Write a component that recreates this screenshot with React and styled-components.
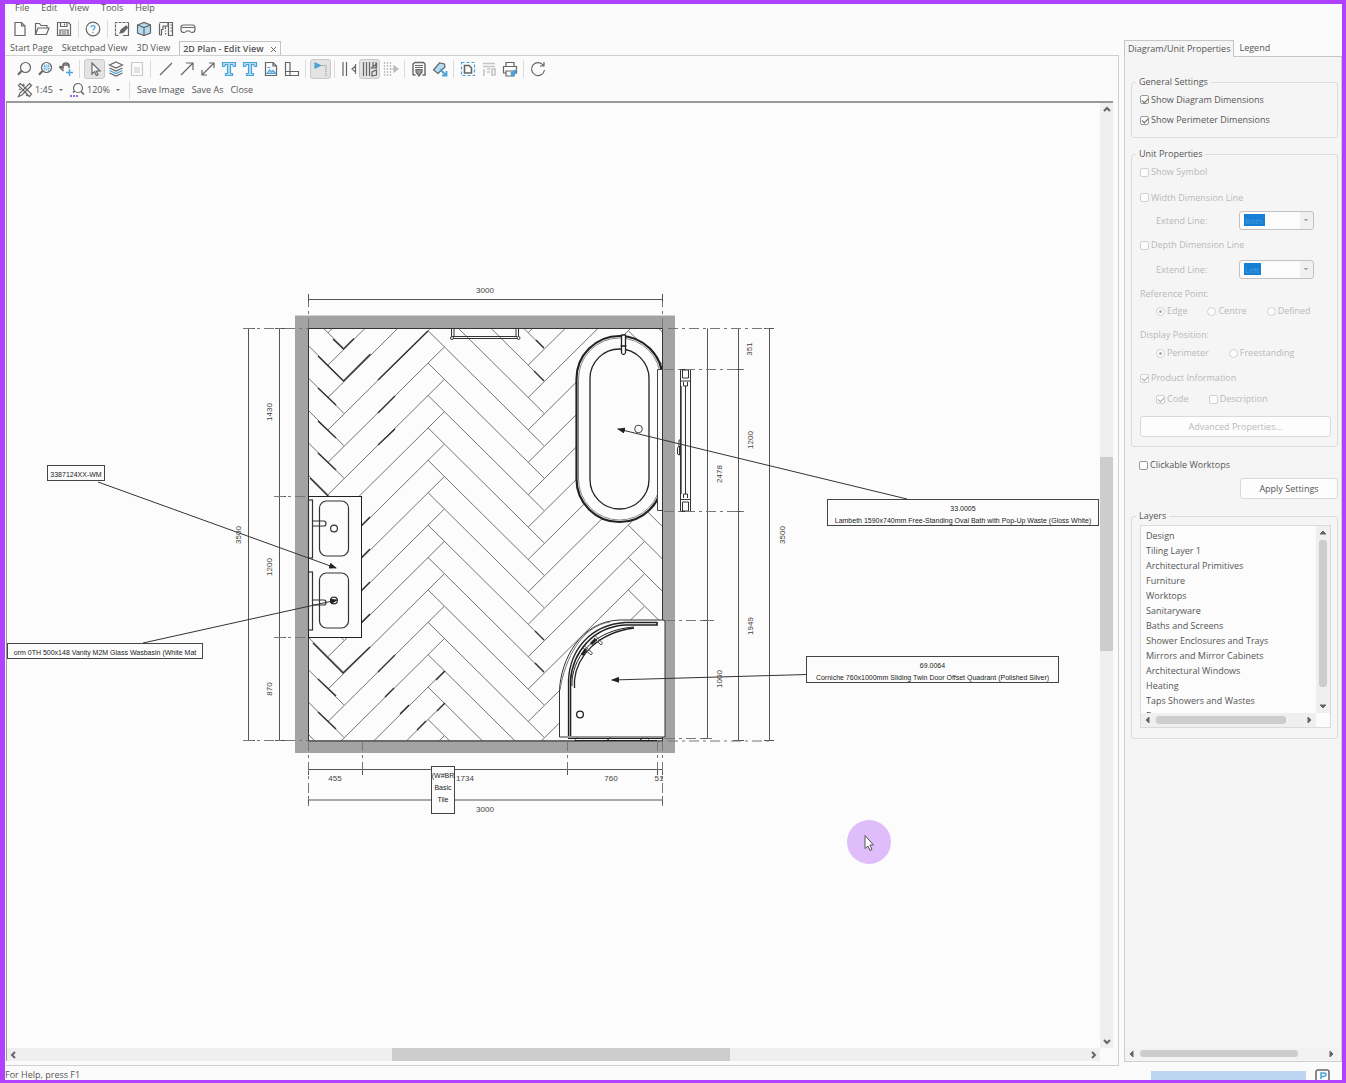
import React, { useState } from "react";
import styled, { createGlobalStyle, css } from "styled-components";

const GlobalStyle = createGlobalStyle`
  * { box-sizing: border-box; }
  body {
    margin: 0;
    background: #fbfbfb;
    color: #555;
    font-family: "Open Sans", "Noto Sans", sans-serif;
    font-size: 9px;
    line-height: 12px;
  }
  button, select, input { font: inherit; color: inherit; margin: 0; }
`;

const Window = styled.div`
  height: 100vh;
  display: flex;
  flex-direction: column;
  overflow: hidden;
  background: #fbfbfb;
  border: 4px solid #b041ff;
  border-left-width: 5px;
  border-bottom-width: 3px;
`;
const Main = styled.div`
  flex: 1;
  min-height: 0;
  display: flex;
`;
const Workspace = styled.main`
  flex: 1;
  min-width: 0;
  display: flex;
  flex-direction: column;
`;
const MenuBar = styled.nav`
  display: flex;
  gap: 12px;
  height: 12px;
  padding-left: 10px;
`;
const MenuItem = styled.button`
  height: 8px;
  padding: 0;
  border: 0;
  background: none;
  line-height: 8px;
`;
const Toolbar = styled.div`
  display: flex;
  align-items: center;
  height: ${p => p.$height}px;
  padding-left: ${p => p.$indent}px;
`;
const ToolButton = styled.button`
  display: flex;
  align-items: center;
  justify-content: center;
  width: ${p => p.$width || 21}px;
  height: 20px;
  padding: 0;
  border: 1px solid transparent;
  border-radius: 3px;
  background: none;
  ${p => p.$active && css`
    background: #e3e3e3;
    border-color: #c9c9c9;
  `}
`;
const Separator = styled.span`
  width: 1px;
  height: 18px;
  margin: 0 ${p => p.$gap || 3}px 0 3px;
  background: #dcdcdc;
`;
const TextButton = styled.button`
  padding: 0;
  margin-right: 7px;
  border: 0;
  background: none;
`;
const PickButton = styled.button`
  display: flex;
  align-items: center;
  gap: 2px;
  width: ${p => p.$width}px;
  padding: 0;
  margin-right: 6px;
  border: 0;
  background: none;
`;
const Caret = styled.span`
  margin-left: auto;
  border: 2px solid transparent;
  border-top-color: #666;
  border-bottom: 0;
`;
const Tabs = styled.div`
  display: flex;
  align-items: flex-end;
  height: 14px;
  padding-left: 5px;
`;
const Tab = styled.button`
  display: flex;
  align-items: center;
  height: 14px;
  padding: 0;
  margin-right: 9px;
  border: 0;
  background: none;
  white-space: nowrap;
  ${p => p.$active && css`
    height: 15px;
    margin: 0 0 -1px 0;
    padding: 0 3px;
    gap: 6px;
    font-weight: 600;
    background: #fbfbfb;
    border: 1px solid #c4c4c4;
    border-bottom: 0;
  `}
`;
const DocFrame = styled.section`
  flex: 1;
  min-height: 0;
  display: flex;
  flex-direction: column;
  border: 1px solid #cfcfcf;
  border-left: 0;
  padding: 3px 5px 4px 0;
`;
const CanvasGrid = styled.div`
  flex: 1;
  min-height: 0;
  margin-left: 1px;
  display: grid;
  grid-template-columns: minmax(0, 1fr) 13px;
  grid-template-rows: minmax(0, 1fr) 13px;
  border-top: 2px solid #9a9a9a;
  border-left: 1px solid #9a9a9a;
`;
const Viewport = styled.div`
  overflow: hidden;
  background: #fcfcfc;
`;
const PlanSvg = styled.svg`
  display: block;
  overflow: visible;
  font-family: "Liberation Sans", Arial, sans-serif;
`;

const ScrollTrack = styled.div`
  display: flex;
  flex-direction: ${p => (p.$vertical ? "column" : "row")};
  background: ${p => p.$bg || "#efefef"};
  min-width: 0;
  min-height: 0;
`;
const ScrollArrow = styled.button`
  flex: 0 0 14px;
  display: flex;
  align-items: center;
  justify-content: center;
  padding: 0;
  border: 0;
  background: none;
`;
const ScrollSpace = styled.div`
  flex: ${p => p.$part} 1 0;
`;
const ScrollThumb = styled.div`
  flex: ${p => p.$part} 1 0;
  background: #cdcdcd;
  margin: ${p => (p.$round ? (p.$vertical ? "0 3px" : "3px 0") : "0")};
  border-radius: ${p => (p.$round ? "3px" : "0")};
`;

const Side = styled.aside`
  flex: 0 0 223px;
  display: flex;
  flex-direction: column;
  padding: 36px 0 4px 5px;
`;
const SideTabs = styled.div`
  display: flex;
  height: 17px;
`;
const SideTab = styled.button`
  padding: ${p => (p.$active ? "0 3px" : "0 5px")};
  border: 0;
  border-bottom: 1px solid #c6c6c6;
  background: none;
  white-space: nowrap;
  ${p => p.$active && css`
    background: #f5f5f5;
    border: 1px solid #c6c6c6;
    border-bottom: 0;
  `}
`;
const TabFill = styled.div`
  flex: 1;
  border-bottom: 1px solid #c6c6c6;
`;
const SideBody = styled.form`
  flex: 1;
  min-height: 0;
  display: flex;
  flex-direction: column;
  padding: 19px 3px 1px 6px;
  background: #f5f5f5;
  border: 1px solid #cfcfcf;
  border-top: 0;
`;
const Group = styled.fieldset`
  min-width: 0;
  margin: 0 0 ${p => p.$after || 0}px;
  padding: ${p => p.$pad};
  border: 1px solid #dcdcdc;
  border-radius: 3px;
`;
const GroupTitle = styled.legend`
  height: 12px;
  padding: 0 3px;
  margin-left: -4px;
`;
const Row = styled.div`
  display: flex;
  align-items: center;
  height: ${p => p.$height || 20}px;
  margin-top: ${p => p.$top || 0}px;
  padding-left: ${p => p.$indent || 0}px;
  gap: ${p => p.$gap || 0}px;
  color: ${p => (p.$disabled ? "#b9b9b9" : "#555")};
`;
const CheckLabel = styled.label`
  display: flex;
  align-items: center;
  gap: 2px;
  white-space: nowrap;
`;
const CheckInput = styled.input`
  appearance: none;
  width: 9px;
  height: 9px;
  display: grid;
  place-items: center;
  background: #fdfdfd;
  border: 1px solid ${p => (p.disabled ? "#d0d0d0" : "#999")};
  border-radius: ${p => (p.type === "radio" ? "50%" : "2px")};
  &:checked::after {
    content: "";
    ${p => p.type === "radio" ? css`
      width: 3px;
      height: 3px;
      border-radius: 50%;
      background: #aaa;
    ` : css`
      width: 5px;
      height: 3px;
      border: solid ${p.disabled ? "#aaa" : "#666"};
      border-width: 0 0 1px 1px;
      transform: rotate(-45deg);
    `}
  }
`;
const LineLabel = styled.label`
  width: 83px;
`;
const LineSelect = styled.select`
  appearance: none;
  width: 75px;
  height: 19px;
  padding: 0 0 0 5px;
  color: #4f9ad6;
  opacity: 1;
  border: 1px solid #c2c2c2;
  border-radius: 3px;
  font-size: 8px;
  background:
    linear-gradient(#1580d6, #1580d6) 4px 2px / ${p => p.$mark}px 12px no-repeat,
    linear-gradient(45deg, transparent 50%, #aaa 50%) 64px 7px / 2px 3px no-repeat,
    linear-gradient(-45deg, transparent 50%, #aaa 50%) 66px 7px / 2px 3px no-repeat,
    linear-gradient(#f0f0f0, #f0f0f0) right / 13px 100% no-repeat,
    #fcfcfc;
`;
const PanelButton = styled.button`
  width: ${p => p.$width || "100%"};
  height: 21px;
  margin-top: ${p => p.$top || 0}px;
  padding: 0;
  background: #fdfdfd;
  border: 1px solid #d9d9d9;
  border-radius: 3px;
  color: ${p => (p.disabled ? "#b9b9b9" : "#555")};
`;
const ButtonRow = styled.div`
  display: flex;
  justify-content: flex-end;
  margin: 3px 0 11px;
`;
const LayerBox = styled.div`
  display: grid;
  grid-template-columns: minmax(0, 1fr) 14px;
  grid-template-rows: 187px 14px;
  background: #fcfcfc;
  border: 1px solid #dadada;
`;
const LayerList = styled.ul`
  margin: 0;
  padding: 2px 0 0 5px;
  overflow: hidden;
  list-style: none;
`;
const LayerItem = styled.li`
  height: 15px;
  line-height: 15px;
  white-space: nowrap;
`;
const Filler = styled.div`
  flex: 1;
`;
const SideScroll = styled.div`
  display: grid;
  height: 13px;
  margin: 0 0 0 -6px;
`;
const StatusBar = styled.footer`
  display: flex;
  height: 14px;
  padding-right: 9px;
  gap: 9px;
`;
const StatusText = styled.span`
  flex: 1;
  padding-top: 3px;
  line-height: 11px;
`;
const StatusProgress = styled.div`
  width: 155px;
  margin-top: 5px;
  background: #bdd5f0;
`;

const G = "#666";
const B = "#4aa3d8";

const icons = {
  newFile: <path d="M3 1.5h6.5L13 5v9.5H3zM9.5 1.5V5H13" />,
  open: <path d="M1.5 13.5v-11h4l1.5 2h6v2.5M1.5 13.5l2.5-6.500h11l-2.500 6.500z" />,
  save: <path d="M1.500 1.500h11l2 2v11h-13zM4.500 1.500v4h6.500v-4M8.500 2.500v2M4 14.500V9h8v5.500M5.500 11h5M5.500 13h5" />,
  help: <><circle cx="8" cy="8" r="6.800" /><path stroke={B} d="M6 6.300C6 4 10 4 10 6.300 10 8 8 7.800 8 9.500M8 11v1.200" /></>,
  design: <><path strokeDasharray="3 1" d="M1.500 14.500v-13h13M1.500 14.500H5" /><path d="M14.500 1.500v13H9" /><path fill={G} d="M6 12l1-3 5-4 1.500 1.500-4.500 5z" /></>,
  cube: <><path fill="#b5dcf3" d="M1.500 4L8 1.500 14.500 4v8L8 14.500 1.500 12z" /><path d="M1.500 4L8 6.500 14.500 4M8 6.500v8" /></>,
  wall: <><path d="M1.500 2.500V14M1.500 1.500H10V5H5v3.500H3.500v5.500H1.500M7.500 5v3M7.500 9.500v1M7.500 12v1.500" /><path d="M10.500 1.500h4v13h-4zM12.500 4h2M12.500 7h2M12.500 10h2" /></>,
  headset: <path d="M3.500 4h9Q15 4 15 7v1.500q0 3-3 3-1.500 0-2.500-1.500h-3q-1 1.500-2.500 1.500-3 0-3-3V7q0-3 2.500-3zM2 6.500h12" />,
  zoom: <><circle cx="9.500" cy="6.500" r="5" /><path strokeWidth="2" d="M5.500 10L2 13.800" /></>,
  zoomWindow: <><circle cx="9.500" cy="6.500" r="5" /><rect x="7" y="4" width="5" height="5" fill="#b5dcf3" stroke={B} strokeDasharray="1 1" /><path strokeWidth="2" d="M5.500 10L2 13.800" /></>,
  pan: <><path d="M5.500 10L2 6.500q-.5-1.500 1-1L5 7V3.500Q5.500 2 8 2t3 2v3M4.500 4h6" strokeWidth="1.500" /><path stroke={B} strokeWidth="1.400" d="M11.500 8v7M8 11.500h7" /></>,
  pointer: <path fill="#fff" d="M5 2v11l2.600-2.500 1.700 4 1.700-.8-1.700-3.700H13z" />,
  layers: <><path d="M8 1l6.500 3L8 7 1.500 4zM1.500 7L8 10l6.500-3" /><path stroke={B} d="M1.500 9.500l6.500 3 6.500-3" /><path d="M1.500 12L8 15l6.500-3" /></>,
  sheet: <g stroke="#c9c9c9"><path d="M2.500 1.500h11v13h-11zM5 7h6M5 9h6M5 11h6" /></g>,
  line: <path d="M2 14L14 2" />,
  arrow: <path d="M2 14L14 2M7 2h7v7" />,
  doubleArrow: <path d="M2 14L14 2M9 2h5v5M2 9v5h5" />,
  text: <path fill="#b5dcf3" stroke={B} d="M1.500 1.500h13v4h-2l-1-2H9.500v9h2v2h-7v-2h2v-9h-2l-1 2h-2z" />,
  image: <><path d="M2.500 1.500H10L13.500 5v9.500h-11zM10 1.500V5h3.500" /><path stroke={B} fill="#b5dcf3" d="M4 12.500L6.500 9l2 2 1.500-1.500 2.500 3zM4.500 6.500h3" /></>,
  corner: <path d="M1.500 1.500H6v9h8.500v4h-13zM1.500 10.500H6v4" />,
  dimension: <><path fill={B} stroke={B} d="M2 2v5L7.500 4.500z" /><path strokeDasharray="1 1" stroke="#999" d="M13 4v11M9 4.500h3" /></>,
  alignLeft: <path d="M2 1v14M5.500 1v14M14.500 5v6L11 8zM14.500 3v10" />,
  alignMid: <path d="M1.500 1v14M4.500 1v14M7.500 1v14M11 1v6M14 1v6M9.500 7l5-4v4zM10 15l4.500-1V9l-4.500 2z" />,
  alignRight: <g stroke="#bbb"><path strokeDasharray="2 1" d="M1.500 1v14M4.500 1v14M7.500 1v14" /><path fill="#bbb" d="M7.500 8H11M11 5v6l4-3z" /></g>,
  saveDoc: <><path strokeWidth="1.400" d="M2 14V3l2-1.500h8.500L14 3v11h-2.500M2 14h2.500" /><path d="M4 4.500h8M4 6.500h8" /><path fill="#999" d="M5 8.500h6V11l-3 4-3-4z" /></>,
  tag: <><path fill="#b5dcf3" d="M1.500 9l6-7 5 1 .5 3-7 6.500z" /><path stroke={B} strokeWidth="1.800" d="M8 8.500l6 5.500M10 14.500h4.500V10" /></>,
  fit: <><path stroke={B} strokeDasharray="3 2" d="M1.500 1.500h13v13h-13z" /><path d="M4.500 4.500H9l2.500 2.500v5h-7z" strokeWidth="1.600" /></>,
  grid: <g stroke="#c4c4c4" strokeWidth="1.600"><path d="M2 2.500h12M2 5.500h12M3 8v7M6 8h3M6 11h3M11 8h3v6h-3z" /></g>,
  print: <><path d="M4 5.500v-4h8v4M3.500 12h-2V5.500h13V12H12M4 10h8v5H4z" /><path fill={B} stroke={B} d="M9 12l5-3-1 4-3 2z" /></>,
  refresh: <path d="M13.500 4.500A6.500 6.500 0 1 0 14.500 9M14 1v4h-4" />,
  scale: <><path d="M12.500 1.500l2 2L5 13l-3.500 1.500L3 11z" /><path d="M1.500 3.500l2-2 11 10.500-2 2.500zM6 2l1.500 1.500M2 7l1.500 1M9 13l1.500 1" /></>,
  zoomPercent: <><circle cx="9" cy="6" r="4.500" /><path strokeWidth="1.600" d="M12 9.500l3 3M5.500 9L4 10.500" /><path stroke="#9a6be0" strokeDasharray="2 1" strokeWidth="2" d="M1 14h8" /></>,
};

function Icon({ name }) {
  return (
    <svg width="16" height="16" viewBox="0 0 16 16" fill="none" stroke={G} strokeWidth="1.2" aria-hidden="true">
      {icons[name]}
    </svg>
  );
}

const fileTools = ["newFile", "open", "save", "|", "help", "|", "design", "cube", "wall", "headset"];
const editTools = [
  "zoom", "zoomWindow", "pan", "|", "pointer", "layers", "sheet", "|",
  "line", "arrow", "doubleArrow", "text", "text", "image", "corner", "|",
  "dimension", "|", "alignLeft", "alignMid", "alignRight", "|",
  "saveDoc", "tag", "|", "fit", "grid", "print", "|", "refresh",
];
const activeTools = ["pointer", "dimension", "alignMid"];

function Tools({ items, width }) {
  return items.map((name, i) =>
    name === "|" ? (
      <Separator key={i} $gap={width || i > 15 ? 3 : 4} />
    ) : (
      <ToolButton key={i} type="button" aria-label={name} $width={width} $active={activeTools.includes(name)}>
        <Icon name={name} />
      </ToolButton>
    )
  );
}

const arrowPaths = {
  up: "M1 5l3-3 3 3",
  down: "M1 3l3 3 3-3",
  left: "M5 1L2 4l3 3",
  right: "M3 1l3 3-3 3",
};

function Scrollbar({ vertical, before, size, after, round, bg }) {
  const [start, end] = vertical ? ["up", "down"] : ["left", "right"];
  const arrow = dir => (
    <ScrollArrow type="button" aria-label={"Scroll " + dir}>
      <svg width="8" height="8" fill={round ? G : "none"} stroke={G} strokeWidth={round ? 1 : 2}>
        <path d={arrowPaths[dir] + (round ? "z" : "")} />
      </svg>
    </ScrollArrow>
  );
  return (
    <ScrollTrack $vertical={vertical} $bg={bg}>
      {arrow(start)}
      <ScrollSpace $part={before} />
      <ScrollThumb $part={size} $round={round} $vertical={vertical} />
      <ScrollSpace $part={after} />
      {arrow(end)}
    </ScrollTrack>
  );
}

// Herringbone floor: two families of joints, repeated every STEP down and PERIOD across
const STEP = 32.4;
const PERIOD = 200.2;
const RUN = 116;
const RISE = 115;

function floorPath() {
  let d = "";
  for (let col = -1; col < 3; col++) {
    for (let row = -6; row < 15; row++) {
      const x = col * PERIOD;
      d += `M${444 + x} ${347.3 + row * STEP}l${-RUN} ${RISE}`;
      d += `M${428 + x} ${330.6 + row * STEP}l${RUN} ${RISE}`;
    }
  }
  return d;
}

const dimensionTexts = [
  [485, 293, "3000"], [485, 812, "3000"], [335, 781, "455"],
  [465, 781, "1734"], [611, 781, "760"], [659, 781, "51"],
];
const verticalTexts = [
  [272, 412, "1430"], [241, 535, "3500"], [272, 567, "1200"], [272, 689, "870"],
  [752, 349, "351"], [753, 440, "1200"], [722, 474, "2478"],
  [785, 535, "3500"], [753, 626, "1949"], [722, 679, "1000"],
];

function Basin({ y, tapY }) {
  return (
    <g>
      <rect x="308.500" y={y - 1} width="4" height="58" />
      <rect x="319.500" y={y} width="29" height="55" rx="7" />
      <circle cx="334" cy={y + 27.5} r="3.400" />
      <path d={`M313 ${tapY}h11q2 0 2 2.500t-2 2.500h-11`} />
    </g>
  );
}

function Callout({ x, y, width, height, lines }) {
  return (
    <g>
      <rect x={x} y={y} width={width} height={height} fill="#fcfcfc" stroke="#444" />
      {lines.map((line, i) => (
        <text key={i} x={x + width / 2} y={y + 11 + i * 12} fontSize="7" textAnchor="middle">
          {line}
        </text>
      ))}
    </g>
  );
}

function Plan() {
  return (
    <PlanSvg width="1093" height="944" viewBox="7 103 1093 944" fill="none" stroke="#444" role="img" aria-label="2D bathroom plan">
      <defs>
        <clipPath id="room"><path d="M308 328H662V741H308z" /></clipPath>
        <marker id="head" markerWidth="8" markerHeight="6" refX="7" refY="3" orient="auto" markerUnits="userSpaceOnUse">
          <path d="M0 0L8 3L0 6z" fill="#222" stroke="none" />
        </marker>
      </defs>

      <path d="M301.500 315.500V746.500H668.500V322H301.500" stroke="#a3a3a3" strokeWidth="13" />
      <g clipPath="url(#room)">
        <path d={floorPath()} stroke="#747474" />
        <path
          stroke="#333"
          strokeWidth="1.400"
          d="M333 339l10.500 10 10.500-10.500M318 356l25.500 25 27-27M428 331l-50 49M318 388l18 17M318 421l18 17M318 453l18 17M395 396l-17 17M395 429l-17 16M310 478l18 18M536 340l8 8M534 371l10 10M370 647l-27 26-30-30M395 655l-17 17M394 688l-9 9M318 679l18 17M318 712l18 17M409 705l-9 9M445 671l-9 9M445 703l-8 8M426 721l-9 9M370 517l-9 9M370 549l-9 9M370 582l-9 9M370 614l-9 9M535 631l9 9M535 663l9 9"
        />
      </g>
      <path d="M308.500 328.500H662.500V741H308.500z" stroke="#333" />

      <g stroke="#333">
        <path d="M451.500 328v10.500h67V328M453 336.500h64M454 328v8M516 328v8" />
        <circle cx="452" cy="338" r="1.500" fill="#fff" />
        <circle cx="518.500" cy="338" r="1.500" fill="#fff" />
      </g>

      {/* bath */}
      <g clipPath="url(#room)" stroke="#222">
        <rect x="576.500" y="336" width="86" height="186" rx="43" fill="#fcfcfc" strokeWidth="2.200" />
        <rect x="578.500" y="338" width="82" height="182" rx="41" stroke="#888" />
        <rect x="590" y="349" width="59" height="160" rx="29.500" strokeWidth="1.300" />
      </g>
      <path d="M662 369.500h-4.500v141h4.500" fill="#fcfcfc" />
      <path d="M621.500 335h4v18q-2 3-4 0zM620.500 346h6" fill="#fff" stroke="#222" strokeWidth="1.300" />
      <circle cx="638.500" cy="429" r="3.800" />

      {/* window */}
      <g stroke="#333">
        <rect x="680.500" y="369.500" width="10" height="142" fill="#fcfcfc" />
        <path d="M681.500 386v108" stroke="#777" />
        <path d="M682.500 370h6v8h-6zM681 381h9M683.500 382v4h4v-4M685.500 386v108M683.500 498v-4h4v4M681 499.500h9M682.500 502h6v9h-6zM681 440h-2v6l-1.500 2v6l2 1v-9" />
      </g>

      {/* vanity */}
      <rect x="308.500" y="496.500" width="53" height="141" fill="#fcfcfc" stroke="#222" />
      <g stroke="#333" strokeWidth="1.200">
        <Basin y={501} tapY={521} />
        <Basin y={573} tapY={600} />
      </g>

      {/* shower */}
      <path d="M559.500 737V690C561 660 580 621 620 620H663q2 0 2 2V737z" fill="#fcfcfc" stroke="#333" />
      <g stroke="#222">
        <path d="M568.500 736V680C570 650 590 625 625 622.500H657" strokeWidth="1.300" />
        <path d="M570.500 736V680C573 652 593 627 625 625H657V622" strokeWidth="1.600" />
        <path d="M572 686V680C575 654 595 630 634 627" />
        <path d="M574.500 688V680C577 656 597 633 634 628" strokeWidth="1.300" />
        <path d="M560 690C565 658 582 626 610 622" stroke="#777" />
        <path d="M568 738.500H662M575 740.500H657M608 738v3M641 738v3" />
        <path d="M583 648l8 7 1.500-2-8-7M594 638l7 7 1.500-2-7-7" stroke="#555" />
        <path d="M582 655l4-6M591 644l5-5" strokeWidth="3" />
        <circle cx="580" cy="714.500" r="3.400" strokeWidth="1.300" />
      </g>

      {/* dimension lines */}
      <g stroke="#555">
        <path d="M308.500 299.500H662.500M248.500 328.500V741M279.500 328.500V741M707.500 328.500V739M738.500 328.500V741M769.500 328.500V741M308.500 769.500H662.500M308.500 800H662.500" />
        <path d="M308.500 294v8M662.500 294v8M243 328.500h12M275 328.500h10M243 740.500h12M275 740.500h10M274 496.500h12M274 637.500h12M702 620.500h12M702 738.500h10M733 369.500h11M733 511.500h11M764 328.500h10M764 740.500h10M733 740.500h11M362.500 764v11M567.500 764v11M657.500 764v11M308.500 764v11M308.500 796v10M662.500 764v11M662.500 796v10" />
        <path strokeDasharray="10 4 3 4" stroke="#777" d="M308.500 328V302M662.500 328V302M243 328.500H308M243 740.500H308M274 496.500H308M274 637.500H308M668 328.500H770M664 369.500H744M664 511.500H744M665 620.500H714M665 738.500H712M668 741H770M308.500 741V806M362.500 741V770M567.500 741V770M657.500 741V770M662.500 741V806" />
      </g>
      <g fill="#444" stroke="none" fontSize="8" textAnchor="middle">
        {dimensionTexts.map(([x, y, label]) => (
          <text key={x + "-" + y} x={x} y={y}>{label}</text>
        ))}
        {verticalTexts.map(([x, y, label]) => (
          <text key={x + "-" + y} transform={`translate(${x} ${y}) rotate(-90)`}>{label}</text>
        ))}
      </g>

      {/* leaders */}
      <g stroke="#333">
        <path d="M98 482L336 568" markerEnd="url(#head)" />
        <path d="M143 643L337 600" markerEnd="url(#head)" />
        <path d="M907 499L618 429" markerEnd="url(#head)" />
        <path d="M807 674.500L612 680" markerEnd="url(#head)" />
      </g>

      <g fill="#222" stroke="none">
        <Callout x={47.5} y={465.5} width={57} height={15} lines={["3387124XX-WM"]} />
        <Callout x={7.5} y={643.5} width={195} height={15} lines={["orm 0TH 500x148 Vanity M2M Glass Wasbasin (White Mat"]} />
        <Callout x={827.5} y={499.500} width={271} height={26} lines={["33.0005", "Lambeth 1590x740mm Free-Standing Oval Bath with Pop-Up Waste (Gloss White)"]} />
        <Callout x={806.5} y={656.5} width={252} height={26} lines={["69.0064", "Corniche 760x1000mm Sliding Twin Door Offset Quadrant (Polished Silver)"]} />
        <Callout x={431.5} y={766.500} width={23} height={47} lines={["(W#BR", "Basic", "Tile"]} />
      </g>

      <circle cx="869" cy="842" r="22" fill="#dfbdfb" stroke="none" />
      <path d="M865 835.500v13l3-2.500 2 4.500 2-1-2-4.500h3.500z" fill="#fff" stroke="#555" />
    </PlanSvg>
  );
}

function Check({ label, type = "checkbox", ...rest }) {
  return (
    <CheckLabel>
      <CheckInput type={type} {...rest} />
      {label}
    </CheckLabel>
  );
}

const layers = [
  "Design", "Tiling Layer 1", "Architectural Primitives", "Furniture", "Worktops",
  "Sanitaryware", "Baths and Screens", "Shower Enclosures and Trays",
  "Mirrors and Mirror Cabinets", "Architectural Windows", "Heating",
  "Taps Showers and Wastes", "D",
];

function Properties() {
  const [form, setForm] = useState({ diagram: true, perimeter: true, worktops: false });
  const onChange = e => {
    const { name, checked } = e.target;
    setForm(f => ({ ...f, [name]: checked }));
  };

  return (
    <Side>
      <SideTabs>
        <SideTab type="button" $active>Diagram/Unit Properties</SideTab>
        <SideTab type="button">Legend</SideTab>
        <TabFill />
      </SideTabs>
      <SideBody onSubmit={e => e.preventDefault()}>
        <Group $pad="1px 8px 7px" $after={10}>
          <GroupTitle>General Settings</GroupTitle>
          <Row $height={21}>
            <Check label="Show Diagram Dimensions" name="diagram" checked={form.diagram} onChange={onChange} />
          </Row>
          <Row>
            <Check label="Show Perimeter Dimensions" name="perimeter" checked={form.perimeter} onChange={onChange} />
          </Row>
        </Group>

        <Group $pad="0 6px 9px 8px" $after={8}>
          <GroupTitle>Unit Properties</GroupTitle>
          <Row $disabled $height={24}><Check label="Show Symbol" disabled /></Row>
          <Row $disabled $height={27}><Check label="Width Dimension Line" disabled /></Row>
          <Row $disabled $height={19} $indent={16}>
            <LineLabel htmlFor="widthLine">Extend Line:</LineLabel>
            <LineSelect id="widthLine" $mark={21} disabled><option>Both</option></LineSelect>
          </Row>
          <Row $disabled $height={30}><Check label="Depth Dimension Line" disabled /></Row>
          <Row $disabled $height={19} $indent={16}>
            <LineLabel htmlFor="depthLine">Extend Line:</LineLabel>
            <LineSelect id="depthLine" $mark={17} disabled><option>Left</option></LineSelect>
          </Row>
          <Row $disabled $height={12} $top={9}>Reference Point:</Row>
          <Row $disabled $height={22} $indent={16} $gap={20}>
            <Check type="radio" name="point" label="Edge" defaultChecked disabled />
            <Check type="radio" name="point" label="Centre" disabled />
            <Check type="radio" name="point" label="Defined" disabled />
          </Row>
          <Row $disabled $height={14} $top={6}>Display Position:</Row>
          <Row $disabled $height={22} $indent={16} $gap={20}>
            <Check type="radio" name="position" label="Perimeter" defaultChecked disabled />
            <Check type="radio" name="position" label="Freestanding" disabled />
          </Row>
          <Row $disabled $height={28}><Check label="Product Information" defaultChecked disabled /></Row>
          <Row $disabled $height={14} $indent={16} $gap={20}>
            <Check label="Code" defaultChecked disabled />
            <Check label="Description" disabled />
          </Row>
          <PanelButton type="button" $top={10} disabled>Advanced Properties...</PanelButton>
        </Group>

        <Row $height={20} $indent={8}>
          <Check label="Clickable Worktops" name="worktops" checked={form.worktops} onChange={onChange} />
        </Row>
        <ButtonRow>
          <PanelButton type="submit" $width="98px">Apply Settings</PanelButton>
        </ButtonRow>

        <Group $pad="3px 6px 10px 8px">
          <GroupTitle>Layers</GroupTitle>
          <LayerBox>
            <LayerList>
              {layers.map(name => <LayerItem key={name}>{name}</LayerItem>)}
            </LayerList>
            <Scrollbar vertical round before={0} size={147} after={12} />
            <Scrollbar round before={1} size={130} after={16} />
          </LayerBox>
        </Group>
        <Filler />
        <SideScroll>
          <Scrollbar round bg="#f2f2f2" before={1} size={160} after={26} />
        </SideScroll>
      </SideBody>
    </Side>
  );
}

export default function App() {
  return (
    <>
      <GlobalStyle />
      <Window>
        <Main>
          <Workspace>
            <MenuBar>
              {["File", "Edit", "View", "Tools", "Help"].map(item => (
                <MenuItem key={item} type="button">{item}</MenuItem>
              ))}
            </MenuBar>
            <Toolbar $height={25} $indent={4}>
              <Tools items={fileTools} width={22} />
            </Toolbar>
            <Tabs>
              <Tab type="button">Start Page</Tab>
              <Tab type="button">Sketchpad View</Tab>
              <Tab type="button">3D View</Tab>
              <Tab type="button" $active>
                2D Plan - Edit View
                <svg width="7" height="7" stroke={G}><path d="M1 1l5 5M6 1L1 6" /></svg>
              </Tab>
            </Tabs>
            <DocFrame>
              <Toolbar $height={20} $indent={8}>
                <Tools items={editTools} />
              </Toolbar>
              <Toolbar $height={22} $indent={12}>
                <PickButton type="button" $width={46}><Icon name="scale" />1:45<Caret /></PickButton>
                <PickButton type="button" $width={51}><Icon name="zoomPercent" />120%<Caret /></PickButton>
                <Separator $gap={7} />
                <TextButton type="button">Save Image</TextButton>
                <TextButton type="button">Save As</TextButton>
                <TextButton type="button">Close</TextButton>
              </Toolbar>
              <CanvasGrid>
                <Viewport><Plan /></Viewport>
                <Scrollbar vertical before={340} size={195} after={383} />
                <Scrollbar before={371} size={338} after={356} />
              </CanvasGrid>
            </DocFrame>
          </Workspace>
          <Properties />
        </Main>
        <StatusBar>
          <StatusText>For Help, press F1</StatusText>
          <StatusProgress />
          <svg width="18" height="14" fill="none" stroke="#666" strokeWidth="1.5" aria-label="Parking">
            <rect x="1" y="4" width="13" height="11" rx="2" />
            <path stroke={B} d="M6 13V7h3q2 0 2 1.500T9 10.500H6" />
          </svg>
        </StatusBar>
      </Window>
    </>
  );
}
